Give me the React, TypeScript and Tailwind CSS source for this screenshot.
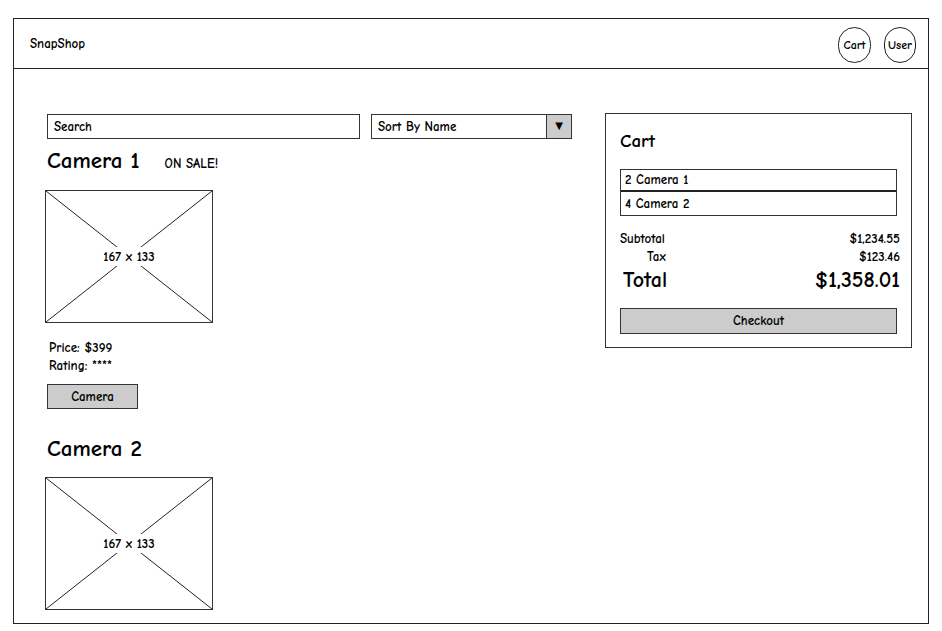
import React from "react";

const font = { fontFamily: '"Comic Neue", "Comic Sans MS", "DejaVu Sans", sans-serif' };

const Placeholder = () => {
  return (
    <div className="relative w-[168px] h-[133px] border border-[#333] ml-[-2px]">
      <svg className="absolute inset-0" width="166" height="131" viewBox="0 0 166 131">
        <line x1="0" y1="0" x2="166" y2="131" stroke="#222" strokeWidth="1" />
        <line x1="166" y1="0" x2="0" y2="131" stroke="#222" strokeWidth="1" />
      </svg>
      <div className="absolute inset-0 flex items-center justify-center">
        <span className="bg-white px-[2px] text-[13px] text-black">167 x 133</span>
      </div>
    </div>
  );
};

const App = () => {
  return (
    <div className="w-[942px] h-[631px] bg-white pt-[18px] pl-[13px] text-black font-bold" style={font}>
      <div className="w-[916px] h-[606px] border border-[#222] flex flex-col">
        <div className="h-[50px] border-b border-[#222] flex items-center justify-between pl-[16px] pr-[12px]">
          <span className="text-[13px]">SnapShop</span>
          <div className="flex gap-[13px] pt-[2px]">
            <div className="w-[33px] h-[36px] rounded-full border border-[#222] flex items-center justify-center text-[12px]">
              Cart
            </div>
            <div className="w-[32px] h-[36px] rounded-full border border-[#222] flex items-center justify-center text-[12px]">
              User
            </div>
          </div>
        </div>

        <div className="flex pl-[33px] pt-[45px]">
          <div className="w-[525px] flex flex-col">
            <div className="flex items-center gap-[11px]">
              <div className="w-[313px] h-[25px] border border-[#333] flex items-center px-[6px] text-[13px]">
                Search
              </div>
              <div className="w-[201px] h-[25px] border border-[#333] flex text-[13px]">
                <div className="flex-1 flex items-center px-[6px]">Sort By Name</div>
                <div className="w-[25px] border-l border-[#333] bg-[#cccccc] flex items-center justify-center text-[10px]">
                  ▼
                </div>
              </div>
            </div>

            <div className="flex items-baseline gap-[25px] mt-[9px]">
              <span className="text-[23px] leading-[26px]">Camera 1</span>
              <span className="text-[13px]">ON SALE!</span>
            </div>
            <div className="mt-[16px]">
              <Placeholder />
            </div>
            <div className="mt-[16px] ml-[2px] text-[13px] leading-[18px]">
              <div>Price: $399</div>
              <div>Rating: ****</div>
            </div>
            <div className="mt-[9px] w-[91px] h-[25px] border border-[#333] bg-[#cccccc] flex items-center justify-center text-[13px]">
              Camera
            </div>

            <div className="mt-[27px] text-[23px] leading-[26px]">Camera 2</div>
            <div className="mt-[15px]">
              <Placeholder />
            </div>
          </div>

          <div className="ml-[33px] mt-[-1px] w-[307px] h-[235px] border border-[#333] px-[14px] pt-[14px] flex flex-col">
            <div className="text-[19px] leading-[26px]">Cart</div>
            <div className="mt-[15px] border border-[#333] text-[13px]">
              <div className="h-[22px] flex items-center px-[4px] border-b-2 border-[#222]">2 Camera 1</div>
              <div className="h-[23px] flex items-center px-[4px]">4 Camera 2</div>
            </div>
            <div className="mt-[14px] text-[13px] leading-[18px] mr-[-3px]">
              <div className="flex justify-between">
                <span>Subtotal</span>
                <span>$1,234.55</span>
              </div>
              <div className="flex justify-between">
                <span className="pl-[27px]">Tax</span>
                <span>$123.46</span>
              </div>
            </div>
            <div className="flex justify-between items-baseline mr-[-3px] pl-[3px] text-[22px] leading-[28px]">
              <span>Total</span>
              <span>$1,358.01</span>
            </div>
            <div className="mt-[14px] h-[26px] border border-[#333] bg-[#cccccc] flex items-center justify-center text-[13px]">
              Checkout
            </div>
          </div>
        </div>
      </div>
    </div>
  );
};

export default App;
